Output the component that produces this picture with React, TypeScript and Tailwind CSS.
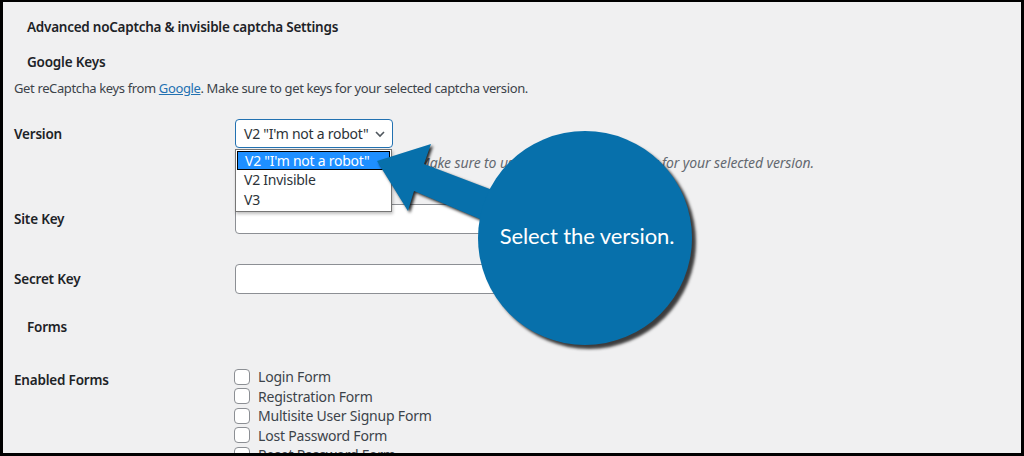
import React from "react";

const forms = [
  "Login Form",
  "Registration Form",
  "Multisite User Signup Form",
  "Lost Password Form",
  "Reset Password Form",
];

function Checkbox() {
  return <span className="block w-[16px] h-[16px] rounded-[4px] border border-[#8c8f94] bg-white shrink-0" />;
}

export default function App() {
  return (
    <div
      className="relative w-[1024px] h-[456px] bg-black pt-[2px] pl-[3px] pr-[3px] pb-[3px] overflow-hidden"
      style={{ fontFamily: '"Noto Sans", sans-serif' }}
    >
      <div className="h-full bg-[#f0f0f1] flex flex-col text-[#3c434a] text-[13px] overflow-hidden">
        <h2 className="mt-[15px] pl-[24px] text-[13.5px] leading-[20px] font-semibold text-[#1d2327] tracking-[-0.25px]">
          Advanced noCaptcha &amp; invisible captcha Settings
        </h2>
        <h3 className="mt-[15px] pl-[24px] text-[13.5px] leading-[20px] font-semibold text-[#1d2327] tracking-[-0.2px]">
          Google Keys
        </h3>
        <p className="mt-[7px] pl-[11px] leading-[18px] tracking-[-0.37px]">
          Get reCaptcha keys from{" "}
          <span className="text-[#2271b1] underline">Google</span>. Make sure to get keys for your selected captcha
          version.
        </p>

        {/* Version */}
        <div className="mt-[22px] pl-[11px] flex items-center">
          <div className="w-[221px] font-semibold text-[13.5px] leading-[20px] text-[#1d2327] tracking-[-0.2px]">Version</div>
          <div className="relative">
            <div className="w-[158px] h-[29px] rounded-[4px] border border-[#2271b1] bg-white flex items-center justify-between pl-[8px] pr-[6px] text-[14px] text-[#2c3338] tracking-[-0.25px]">
              <span>V2 "I'm not a robot"</span>
              <svg width="12" height="12" viewBox="0 0 12 12" className="mt-[1px]">
                <path d="M2 4 L6 8 L10 4" fill="none" stroke="#50575e" strokeWidth="1.6" />
              </svg>
            </div>
            <div className="absolute left-0 top-[30px] z-10 w-[157px] bg-white border border-[#767676] shadow-[1px_2px_3px_rgba(0,0,0,0.25)] text-[14px] text-[#2c3338] tracking-[-0.25px] pt-px pb-[2px]">
              <div className="h-[19px] mx-px bg-[#1e8fff] border border-black text-white leading-[17px] pl-[7px]">
                V2 "I'm not a robot"
              </div>
              <div className="h-[19.5px] leading-[19.5px] pl-[8px]">V2 Invisible</div>
              <div className="h-[19.5px] leading-[19.5px] pl-[8px]">V3</div>
            </div>
          </div>
        </div>
        <p className="mt-[6px] pl-[415px] text-[14px] leading-[18px] italic text-[#646970] tracking-[-0.1px] whitespace-nowrap">
          Make sure to use site key and secret key for your selected version.
        </p>

        {/* Site Key */}
        <div className="mt-[32px] pl-[11px] flex items-center">
          <div className="w-[221px] font-semibold text-[13.5px] leading-[20px] text-[#1d2327] tracking-[-0.2px]">Site Key</div>
          <div className="w-[325px] h-[30px] rounded-[4px] border border-[#8c8f94] bg-white" />
        </div>

        {/* Secret Key */}
        <div className="mt-[30px] pl-[11px] flex items-center">
          <div className="w-[221px] font-semibold text-[13.5px] leading-[20px] text-[#1d2327] tracking-[-0.2px]">Secret Key</div>
          <div className="w-[325px] h-[30px] rounded-[4px] border border-[#8c8f94] bg-white" />
        </div>

        <h3 className="mt-[23px] pl-[24px] text-[13.5px] leading-[20px] font-semibold text-[#1d2327] tracking-[-0.2px]">
          Forms
        </h3>

        {/* Enabled Forms */}
        <div className="mt-[30px] pl-[11px] flex items-start">
          <div className="w-[220px] pt-[3px] font-semibold text-[13.5px] leading-[20px] text-[#1d2327] tracking-[-0.2px]">
            Enabled Forms
          </div>
          <div className="flex flex-col">
            {forms.map((f) => (
              <div key={f} className="h-[19.5px] flex items-center gap-[8px] text-[14px] tracking-[-0.2px]">
                <Checkbox />
                <span className="leading-[19.5px]">{f}</span>
              </div>
            ))}
          </div>
        </div>
      </div>

      {/* Callout overlay */}
      <svg
        className="absolute left-0 top-0 z-20 pointer-events-none"
        width="1024"
        height="456"
        viewBox="0 0 1024 456"
        style={{ filter: "drop-shadow(2px 2px 1.5px rgba(0,0,0,0.85))" }}
      >
        <polygon
          points="377,161 431,144 424,164 495,191 487,222 414,191 408,211"
          fill="#0770ab"
        />
      </svg>
      <div className="absolute left-[478px] top-[131px] z-30 w-[214px] h-[214px] rounded-full bg-[#0770ab] shadow-[4px_4px_3px_rgba(0,0,0,0.75)] flex items-center justify-center">
        <span
          className="text-white text-[22px] leading-none pl-[4px] pb-[4px] tracking-[-0.1px]"
          style={{ fontFamily: "Lato, sans-serif" }}
        >
          Select the version.
        </span>
      </div>
    </div>
  );
}
